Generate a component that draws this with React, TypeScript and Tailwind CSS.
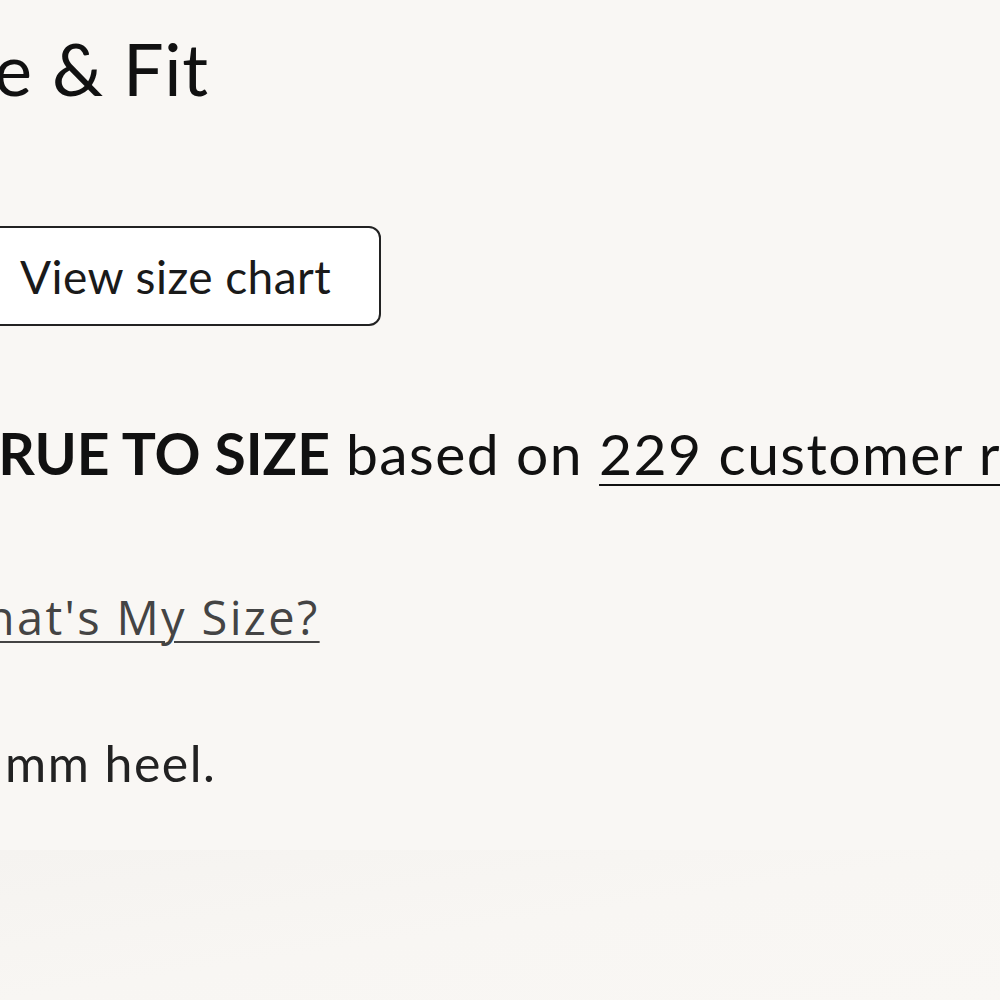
import React from "react";

const SizeAndFit = () => {
  return (
    <div className="w-[1000px] h-[1000px] overflow-hidden bg-[#f9f7f4] text-[#111]" style={{ fontFamily: "Lato, 'Noto Sans', sans-serif" }}>
      <div className="flex flex-col h-[850px] overflow-hidden">
        <h2 className="mt-[20px] -ml-[96px] text-[72px] leading-[96px] font-normal whitespace-nowrap tracking-[0.01em]">
          Size &amp; Fit
        </h2>

        <div className="mt-[110px] -ml-[13px]">
          <button className="h-[100px] pl-[31px] pr-[48px] border-2 border-[#222] rounded-[12px] bg-white text-[46px] tracking-[0.01em] text-[#1a1a1a] whitespace-nowrap">
            View size chart
          </button>
        </div>

        <p className="mt-[92px] -ml-[36px] text-[57px] leading-[70px] whitespace-nowrap tracking-[0.025em] text-[#111]">
          <span className="font-bold tracking-normal">TRUE TO SIZE</span> based on{" "}
          <a className="underline decoration-2 underline-offset-[9px]">229 customer reviews</a>
        </p>

        <p className="mt-[99px] -ml-[60px] text-[47px] leading-[60px] whitespace-nowrap tracking-[0.05em] text-[#444]" style={{ fontFamily: "'Open Sans', sans-serif" }}>
          <a className="underline decoration-2 underline-offset-[6px]">What's My Size?</a>
        </p>

        <p className="mt-[86px] ml-[5px] text-[50px] leading-[60px] whitespace-nowrap tracking-[0.03em] text-[#222]">
          mm heel.
        </p>
      </div>
      <div className="h-[150px] bg-gradient-to-br from-[#f5f3f0] via-[#f8f6f3] to-[#f9f7f4]" />
    </div>
  );
};

export default function App() {
  return <SizeAndFit />;
}
